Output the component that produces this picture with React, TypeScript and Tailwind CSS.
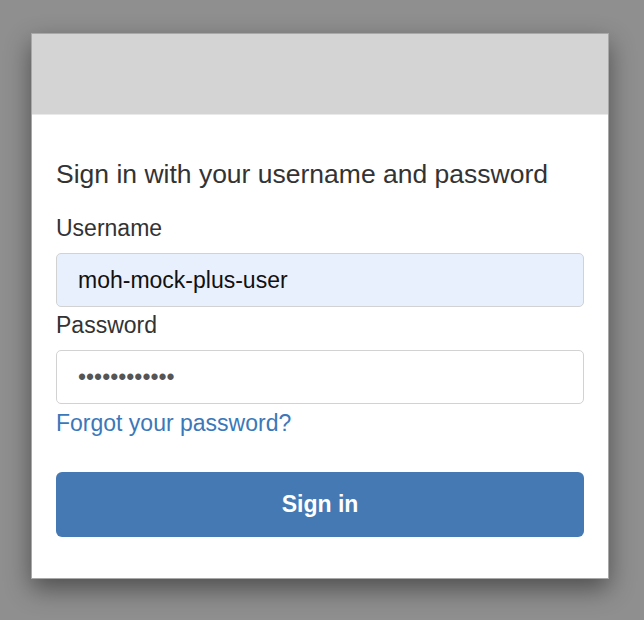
import { useState } from 'react'

const SignInCard = () => {
  const [username, setUsername] = useState('moh-mock-plus-user')
  const [password, setPassword] = useState('ChangeMe1234')

  return (
    <div className="w-[578px] border border-[#a8a8a8] bg-white shadow-[0_10px_24px_rgba(0,0,0,0.45)]">
      <div className="h-[81px] bg-[#d4d4d4] border-b border-[#e9e9e9]" />
      <div className="px-[24px] pb-[41px]">
        <h1 className="mt-[45px] text-[26.5px] leading-[28px] text-[#333333]">
          Sign in with your username and password
        </h1>
        <label className="mt-[27px] block text-[23px] leading-[26px] text-[#333333]">
          Username
        </label>
        <input
          value={username}
          onChange={(e) => setUsername(e.target.value)}
          className="mt-[12px] block h-[54px] w-full rounded-[5px] border border-[#d2d2d2] bg-[#e8f0fe] px-[21px] text-[23px] text-[#111111] outline-none"
        />
        <label className="mt-[5px] block text-[23px] leading-[26px] text-[#333333]">
          Password
        </label>
        <input
          type="password"
          value={password}
          onChange={(e) => setPassword(e.target.value)}
          className="mt-[12px] block h-[54px] w-full rounded-[5px] border border-[#d2d2d2] bg-white px-[21px] text-[23px] text-[#555555] outline-none"
        />
        <a
          href="#"
          className="mt-[6px] block w-fit text-[23px] leading-[26px] text-[#3b78b9]"
        >
          Forgot your password?
        </a>
        <button className="mt-[36px] block h-[65px] w-full rounded-[6px] bg-[#4579b3] text-[23px] font-bold text-white">
          Sign in
        </button>
      </div>
    </div>
  )
}

export default function App() {
  return (
    <div
      className="h-[620px] w-[644px] bg-[#8f8f8f] pl-[31px] pt-[33px]"
      style={{ fontFamily: '"Liberation Sans", Arial, sans-serif' }}
    >
      <SignInCard />
    </div>
  )
}
